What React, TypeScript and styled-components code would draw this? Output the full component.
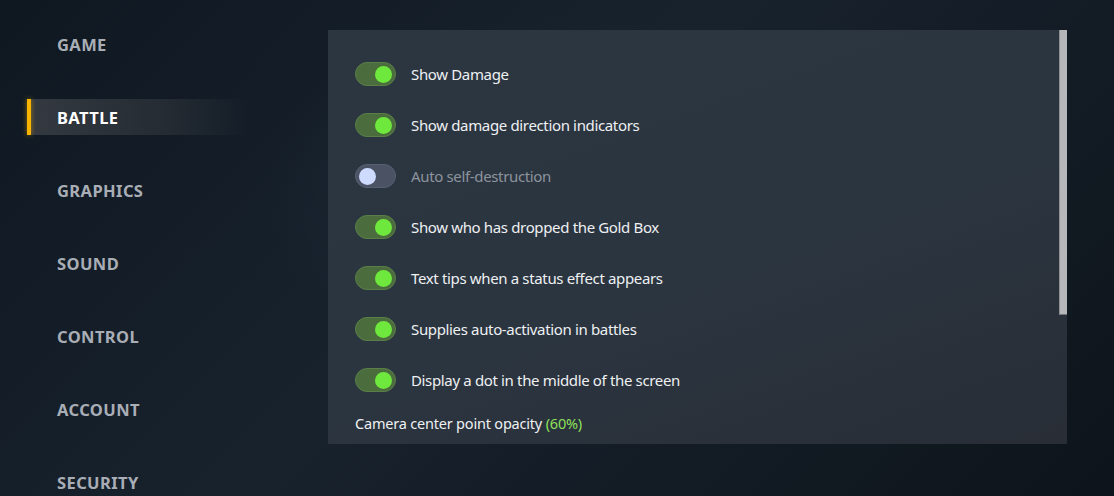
import React from "react";
import styled, { createGlobalStyle } from "styled-components";

const Global = createGlobalStyle`
  html, body {
    margin: 0;
    padding: 0;
    width: 1114px;
    height: 496px;
    overflow: hidden;
    background: #111a23;
  }
  * { box-sizing: border-box; }
`;

const Screen = styled.div`
  width: 1114px;
  height: 496px;
  display: flex;
  background:
    radial-gradient(ellipse 420px 260px at 560px 200px, rgba(60, 75, 90, 0.35), rgba(0, 0, 0, 0) 70%),
    linear-gradient(135deg, #0f1821 0%, #18222d 45%, #0d141b 100%);
  font-family: "Noto Sans", "Liberation Sans", sans-serif;
`;

const Sidebar = styled.nav`
  width: 328px;
  padding-top: 26px;
  display: flex;
  flex-direction: column;
  gap: 37px;
`;

const NavItem = styled.div<{ $active?: boolean }>`
  position: relative;
  flex-shrink: 0;
  height: 36px;
  width: 223px;
  margin-left: 27px;
  display: flex;
  align-items: center;
  padding-left: 30px;
  background: ${(p) =>
    p.$active
      ? "linear-gradient(90deg, rgba(62,66,72,0.8) 0%, rgba(55,60,66,0.5) 60%, rgba(40,46,54,0) 100%)"
      : "transparent"};
  color: ${(p) => (p.$active ? "#ffffff" : "#a9aeb6")};
  font-weight: 700;
  font-size: 16.5px;
  letter-spacing: 0.4px;
  text-transform: uppercase;

  &::before {
    content: "";
    display: ${(p) => (p.$active ? "block" : "none")};
    position: absolute;
    left: 0;
    top: 0;
    bottom: 0;
    width: 4px;
    background: #f7b500;
    box-shadow: 0 0 5px rgba(247, 181, 0, 0.55);
  }
`;

const Panel = styled.section`
  position: relative;
  margin-top: 30px;
  width: 739px;
  height: 414px;
  padding: 32px 0 0 27px;
  background: linear-gradient(160deg, #2c3641 0%, #2b3540 55%, #282d36 100%);
  display: flex;
  flex-direction: column;
  gap: 27px;
`;

const Scrollbar = styled.div`
  position: absolute;
  top: 0;
  right: 0;
  width: 8px;
  height: 285px;
  background: #b6b7bb;
  border-left: 1px solid #8e9096;
  border-bottom: 1px solid #6f7580;
`;

const Row = styled.div`
  display: flex;
  align-items: center;
  gap: 15px;
  height: 24px;
  flex-shrink: 0;
`;

const Track = styled.div<{ $on: boolean }>`
  width: 41px;
  height: 24px;
  border-radius: 12px;
  display: flex;
  align-items: center;
  padding: 0 3px;
  justify-content: ${(p) => (p.$on ? "flex-end" : "flex-start")};
  background: ${(p) => (p.$on ? "#4b6c3c" : "#4a5263")};
  border: 1px solid ${(p) => (p.$on ? "#5a7e48" : "#566073")};
`;

const Knob = styled.div<{ $on: boolean }>`
  width: 17px;
  height: 17px;
  border-radius: 50%;
  background: ${(p) => (p.$on ? "#6fe83d" : "#cfdaff")};
`;

const Label = styled.span<{ $dim?: boolean }>`
  font-size: 15px;
  letter-spacing: -0.35px;
  color: ${(p) => (p.$dim ? "#8c939d" : "#eef0f2")};
`;

const Caption = styled.div`
  margin-top: -6px;
  font-size: 14.5px;
  letter-spacing: -0.2px;
  color: #eef0f2;
`;

const Accent = styled.span`
  color: #8fe05a;
`;

const nav = ["Game", "Battle", "Graphics", "Sound", "Control", "Account", "Security"];

const options = [
  { label: "Show Damage", on: true },
  { label: "Show damage direction indicators", on: true },
  { label: "Auto self-destruction", on: false },
  { label: "Show who has dropped the Gold Box", on: true },
  { label: "Text tips when a status effect appears", on: true },
  { label: "Supplies auto-activation in battles", on: true },
  { label: "Display a dot in the middle of the screen", on: true },
];

export default function App() {
  return (
    <Screen>
      <Global />
      <Sidebar>
        {nav.map((n) => (
          <NavItem key={n} $active={n === "Battle"}>
            {n}
          </NavItem>
        ))}
      </Sidebar>
      <Panel>
        {options.map((o) => (
          <Row key={o.label}>
            <Track $on={o.on}>
              <Knob $on={o.on} />
            </Track>
            <Label $dim={!o.on}>{o.label}</Label>
          </Row>
        ))}
        <Caption>
          Camera center point opacity <Accent>(60%)</Accent>
        </Caption>
        <Scrollbar />
      </Panel>
    </Screen>
  );
}
